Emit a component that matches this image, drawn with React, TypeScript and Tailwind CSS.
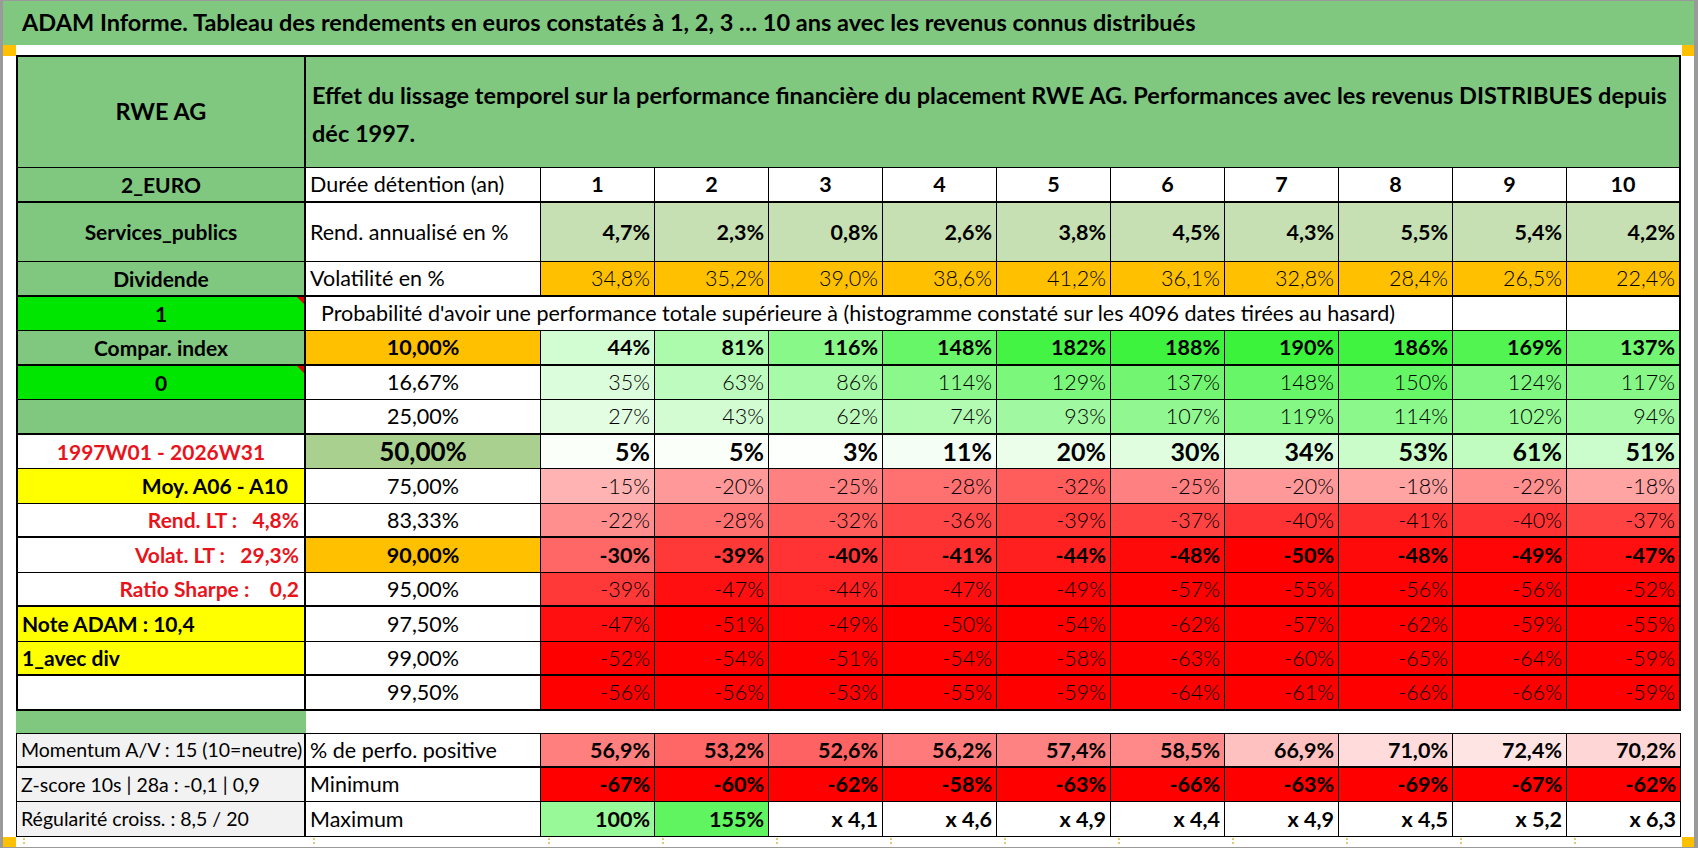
import React from "react";

// ADAM report: rolling-window return table for RWE AG
const durations = [1, 2, 3, 4, 5, 6, 7, 8, 9, 10];
const rend = ["4,7%", "2,3%", "0,8%", "2,6%", "3,8%", "4,5%", "4,3%", "5,5%", "5,4%", "4,2%"];
const vola = ["34,8%", "35,2%", "39,0%", "38,6%", "41,2%", "36,1%", "32,8%", "28,4%", "26,5%", "22,4%"];

type ProbRow = { q: string; vals: number[]; weight: "bold" | "light" | "big"; qBg?: string; qBold?: boolean; thick: boolean };

const probRows: ProbRow[] = [
  { q: "10,00%", vals: [44, 81, 116, 148, 182, 188, 190, 186, 169, 137], weight: "bold", qBg: "bg-[#ffc000]", qBold: true, thick: true },
  { q: "16,67%", vals: [35, 63, 86, 114, 129, 137, 148, 150, 124, 117], weight: "light", thick: false },
  { q: "25,00%", vals: [27, 43, 62, 74, 93, 107, 119, 114, 102, 94], weight: "light", thick: true },
  { q: "50,00%", vals: [5, 5, 3, 11, 20, 30, 34, 53, 61, 51], weight: "big", qBg: "bg-[#a9d08e]", qBold: true, thick: false },
  { q: "75,00%", vals: [-15, -20, -25, -28, -32, -25, -20, -18, -22, -18], weight: "light", thick: false },
  { q: "83,33%", vals: [-22, -28, -32, -36, -39, -37, -40, -41, -40, -37], weight: "light", thick: true },
  { q: "90,00%", vals: [-30, -39, -40, -41, -44, -48, -50, -48, -49, -47], weight: "bold", qBg: "bg-[#ffc000]", qBold: true, thick: false },
  { q: "95,00%", vals: [-39, -47, -44, -47, -49, -57, -55, -56, -56, -52], weight: "light", thick: true },
  { q: "97,50%", vals: [-47, -51, -49, -50, -54, -62, -57, -62, -59, -55], weight: "light", thick: false },
  { q: "99,00%", vals: [-52, -54, -51, -54, -58, -63, -60, -65, -64, -59], weight: "light", thick: true },
  { q: "99,50%", vals: [-56, -56, -53, -55, -59, -64, -61, -66, -66, -59], weight: "light", thick: true },
];

const perfo = [56.9, 53.2, 52.6, 56.2, 57.4, 58.5, 66.9, 71.0, 72.4, 70.2];
const minimum = [-67, -60, -62, -58, -63, -66, -63, -69, -67, -62];
const maximum: (number | string)[] = [100, 155, "x 4,1", "x 4,6", "x 4,9", "x 4,4", "x 4,9", "x 4,5", "x 5,2", "x 6,3"];

function scale(v: number) {
  if (v >= 0) {
    const t = Math.min(v / 190, 1);
    const r = Math.round(255 - 195 * t);
    const g = Math.round(255 - 12 * t);
    return `rgb(${r},${g},${r})`;
  }
  const t = Math.min(-v / 50, 1);
  const gb = Math.round(255 * (1 - t));
  return `rgb(255,${gb},${gb})`;
}

function perfoColor(v: number) {
  const gb = Math.max(0, Math.min(255, Math.round(6.56 * v - 247)));
  return `rgb(255,${gb},${gb})`;
}

function Triangle() {
  return (
    <div className="absolute top-0 right-0 w-0 h-0 border-l-[7px] border-l-transparent border-t-[7px] border-t-[#e00000]" />
  );
}

type Left = { text: string; cls: string; tri?: boolean };

const G = "bg-[#80c880]";
const left: Left[] = [
  { text: "2_EURO", cls: `${G} justify-center font-bold` },
  { text: "Services_publics", cls: `${G} justify-center font-bold` },
  { text: "Dividende", cls: `${G} justify-center font-bold` },
  { text: "1", cls: "bg-[#00e600] justify-center font-bold", tri: true },
  { text: "Compar. index", cls: `${G} justify-center font-bold` },
  { text: "0", cls: "bg-[#00e600] justify-center font-bold", tri: true },
  { text: "", cls: G },
  { text: "1997W01 - 2026W31", cls: "bg-white justify-center font-bold text-[#e8141c]" },
  { text: "Moy. A06 - A10", cls: "bg-[#ffff00] justify-end pr-[16px] font-bold" },
  { text: "Rend. LT :   4,8%", cls: "bg-white justify-end pr-[5px] font-bold text-[#e8141c]" },
  { text: "Volat. LT :   29,3%", cls: "bg-white justify-end pr-[5px] font-bold text-[#e8141c]" },
  { text: "Ratio Sharpe :    0,2", cls: "bg-white justify-end pr-[5px] font-bold text-[#e8141c]" },
  { text: "Note ADAM : 10,4", cls: "bg-[#ffff00] justify-start pl-[4px] font-bold" },
  { text: "1_avec div", cls: "bg-[#ffff00] justify-start pl-[4px] font-bold" },
  { text: "", cls: "bg-white" },
];

// thick bottom rule after these rows (index in the 15 body rows)
const thickRows = [0, 2, 4, 6, 9, 11, 13, 14];

const base = "relative flex items-center whitespace-pre overflow-hidden border-black";

function LeftCell({ i }: { i: number }) {
  const l = left[i];
  const b = thickRows.includes(i) ? "border-b-2" : "border-b";
  return (
    <div className={`${base} ${b} border-l-2 border-r-2 text-[21px] ${l.cls}`}>
      {l.text}
      {l.tri && <Triangle />}
    </div>
  );
}

function dataCls(last: boolean, thick: boolean) {
  return `${base} ${thick ? "border-b-2" : "border-b"} ${last ? "border-r-2" : "border-r"}`;
}

export default function App() {
  return (
    <div className="relative w-[1698px] h-[848px] bg-white border-l-[3px] border-r-[4px] border-y border-[#9a9a9a] overflow-hidden font-[Lato,sans-serif] text-black">
      <div className="h-[44px] bg-[#80c880] pl-[19px] flex items-center text-[23.5px] font-bold">
        ADAM Informe. Tableau des rendements en euros constatés à 1, 2, 3 … 10 ans avec les revenus connus distribués
      </div>

      <div className="ml-[13px] mt-[10px] grid grid-cols-[290px_235px_repeat(10,114px)] grid-rows-[113px_35px_59px_repeat(13,34.5px)_22.5px_35px_34px_35px_8px]">
        {/* header */}
        <div className={`${base} ${G} border-t-2 border-l-2 border-r-2 border-b justify-center text-[23.5px] font-bold`}>RWE AG</div>
        <div className={`${base} ${G} col-span-11 border-t-2 border-r-2 border-b pl-[6px] text-[23.5px] font-bold leading-[38px] whitespace-normal`}>
          <div className="pt-[4px]">
            Effet du lissage temporel sur la performance financière du placement RWE AG. Performances avec les revenus DISTRIBUES depuis
            <br />
            déc 1997.
          </div>
        </div>

        {/* Durée détention */}
        <LeftCell i={0} />
        <div className={`${dataCls(false, true)} pl-[4px] text-[21.5px]`}>Durée détention (an)</div>
        {durations.map((d, j) => (
          <div key={d} className={`${dataCls(j === 9, true)} justify-center text-[21.5px] font-bold`}>{d}</div>
        ))}

        {/* Rendement annualisé */}
        <LeftCell i={1} />
        <div className={`${dataCls(false, false)} pl-[4px] text-[21.5px]`}>Rend. annualisé en %</div>
        {rend.map((r, j) => (
          <div key={j} className={`${dataCls(j === 9, false)} bg-[#c6e0b4] justify-end pr-[4px] text-[21.5px] font-bold`}>{r}</div>
        ))}

        {/* Volatilité */}
        <LeftCell i={2} />
        <div className={`${dataCls(false, true)} pl-[4px] text-[21.5px]`}>Volatilité en %</div>
        {vola.map((v, j) => (
          <div key={j} className={`${dataCls(j === 9, true)} bg-[#ffc000] justify-end pr-[4px] text-[21.5px] font-light`}>{v}</div>
        ))}

        {/* Probabilité */}
        <LeftCell i={3} />
        <div className={`${base} col-span-9 border-b border-r pl-[15px] text-[21.5px]`}>
          Probabilité d'avoir une performance totale supérieure à (histogramme constaté sur les 4096 dates tirées au hasard)
        </div>
        <div className={dataCls(false, false)} />
        <div className={dataCls(true, false)} />

        {probRows.map((row, k) => (
          <React.Fragment key={row.q}>
            <LeftCell i={4 + k} />
            <div
              className={`${dataCls(false, row.thick)} justify-center ${row.qBg ?? "bg-white"} ${
                row.weight === "big" ? "text-[26px] font-bold" : row.qBold ? "text-[21.5px] font-bold" : "text-[21.5px]"
              }`}
            >
              {row.q}
            </div>
            {row.vals.map((v, j) => (
              <div
                key={j}
                className={`${dataCls(j === 9, row.thick)} justify-end pr-[4px] ${
                  row.weight === "big" ? "text-[25px] font-bold" : row.weight === "bold" ? "text-[21.5px] font-bold" : "text-[21.5px] font-light"
                }`}
                style={{ backgroundColor: scale(v) }}
              >
                {v}%
              </div>
            ))}
          </React.Fragment>
        ))}

        {/* spacer */}
        <div className={G} />
        <div className="col-span-11" />

        {/* bottom block */}
        <div className={`${base} border-t border-l border-r-2 border-b-2 bg-[#f2f2f2] pl-[4px] text-[19.5px]`}>Momentum A/V : 15 (10=neutre)</div>
        <div className={`${base} border-t border-r border-b-2 pl-[4px] text-[21.5px]`}>% de perfo. positive</div>
        {perfo.map((v, j) => (
          <div
            key={j}
            className={`${base} border-t border-r border-b-2 justify-end pr-[4px] text-[21.5px] font-bold`}
            style={{ backgroundColor: perfoColor(v) }}
          >
            {v.toFixed(1).replace(".", ",")}%
          </div>
        ))}

        <div className={`${base} border-l border-r-2 border-b bg-[#f2f2f2] pl-[4px] text-[19.5px]`}>Z-score 10s | 28a : -0,1 | 0,9</div>
        <div className={`${base} border-r border-b pl-[4px] text-[21.5px]`}>Minimum</div>
        {minimum.map((v, j) => (
          <div key={j} className={`${base} border-r border-b justify-end pr-[4px] text-[21.5px] font-bold`} style={{ backgroundColor: scale(v) }}>
            {v}%
          </div>
        ))}

        <div className={`${base} border-l border-r-2 border-b bg-[#f2f2f2] pl-[4px] text-[19.5px]`}>Régularité croiss. : 8,5 / 20</div>
        <div className={`${base} border-r border-b pl-[4px] text-[21.5px]`}>Maximum</div>
        {maximum.map((v, j) => (
          <div
            key={j}
            className={`${base} border-r border-b justify-end pr-[4px] text-[21.5px] font-bold`}
            style={{ backgroundColor: typeof v === "number" ? scale(v) : "#ffffff" }}
          >
            {typeof v === "number" ? `${v}%` : v}
          </div>
        ))}

        {/* faint page-break ticks under each column */}
        {Array.from({ length: 12 }).map((_, j) => (
          <div key={j} className="flex items-start pl-[7px] pt-[1px]">
            <span className="w-[3px] h-[6px] border-l-2 border-dotted border-[#e6c870]" />
          </div>
        ))}
      </div>

      {/* selection handles */}
      <div className="absolute left-[-3px] top-[44px] w-[16px] h-[11px] bg-[#ffc000]" />
      <div className="absolute right-[-4px] top-[44px] w-[16px] h-[11px] bg-[#ffc000]" />
      <div className="absolute left-[-3px] bottom-0 w-[16px] h-[10px] bg-[#ffc000]" />
      <div className="absolute right-[-4px] bottom-0 w-[16px] h-[10px] bg-[#ffc000]" />
    </div>
  );
}
